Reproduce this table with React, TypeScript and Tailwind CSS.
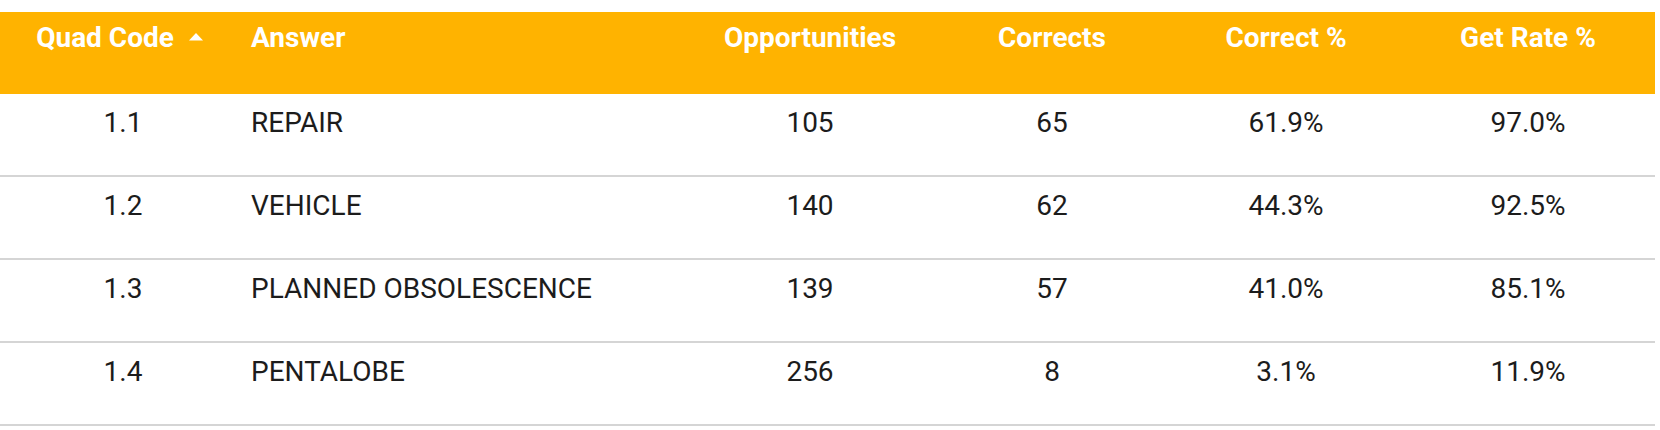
import { useState } from 'react';

interface Fila {
  codigo: string;
  respuesta: string;
  oportunidades: number;
  correctas: number;
  correctoPct: string;
  getRate: string;
}

const filas: Fila[] = [
  { codigo: '1.1', respuesta: 'REPAIR', oportunidades: 105, correctas: 65, correctoPct: '61.9%', getRate: '97.0%' },
  { codigo: '1.2', respuesta: 'VEHICLE', oportunidades: 140, correctas: 62, correctoPct: '44.3%', getRate: '92.5%' },
  { codigo: '1.3', respuesta: 'PLANNED OBSOLESCENCE', oportunidades: 139, correctas: 57, correctoPct: '41.0%', getRate: '85.1%' },
  { codigo: '1.4', respuesta: 'PENTALOBE', oportunidades: 256, correctas: 8, correctoPct: '3.1%', getRate: '11.9%' },
];

const cols = 'grid grid-cols-[246px_441px_246px_238px_230px_1fr]';

export default function App() {
  const [asc] = useState(true);

  return (
    <div className="w-[1660px] h-[430px] bg-white pt-[12px] font-['Roboto','Liberation_Sans',sans-serif]">
      <div className="w-[1655px]">
        <div className={`${cols} h-[82px] bg-[#ffb300] text-white font-bold text-[28px] leading-[32px] pt-[10px]`}>
          <div className="flex items-start justify-center gap-[15px] pr-[7px]">
            <span>Quad Code</span>
            <svg width="14" height="8" viewBox="0 0 14 8" className={asc ? 'mt-[11px]' : 'mt-[11px] rotate-180'}>
              <path d="M7 0 L14 7.5 L0 7.5 Z" fill="white" />
            </svg>
          </div>
          <div className="pl-[5px]">Answer</div>
          <div className="text-center">Opportunities</div>
          <div className="text-center">Corrects</div>
          <div className="text-center">Correct %</div>
          <div className="text-center">Get Rate %</div>
        </div>
        {filas.map((f) => (
          <div
            key={f.codigo}
            className={`${cols} h-[83px] border-b-2 border-[#d5d5d5] text-[28px] leading-[32px] pt-[13px] text-[#1c1c1c]`}
          >
            <div className="text-center">{f.codigo}</div>
            <div className="pl-[5px]">{f.respuesta}</div>
            <div className="text-center">{f.oportunidades}</div>
            <div className="text-center">{f.correctas}</div>
            <div className="text-center">{f.correctoPct}</div>
            <div className="text-center">{f.getRate}</div>
          </div>
        ))}
      </div>
    </div>
  );
}
